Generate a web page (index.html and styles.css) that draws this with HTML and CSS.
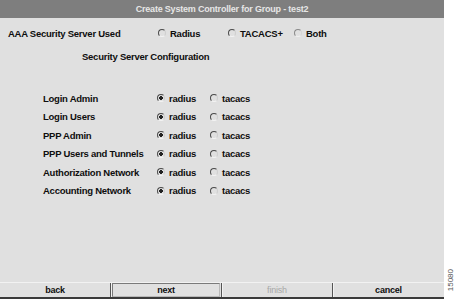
FILE: index.html
```html
<!DOCTYPE html>
<html lang="en">
<head>
    <meta charset="UTF-8">
    <title>Create System Controller for Group - test2</title>
    <link rel="stylesheet" href="styles.css">
</head>
<body>
    <div class="page">
        <div class="panel">
            <div class="title">Create System Controller for Group - test2</div>
            <div class="content">
                <div class="server-row">
                    <span class="label">AAA Security Server Used</span>
                    <label class="opt"><input type="radio" name="server"> Radius</label>
                    <label class="opt"><input type="radio" name="server"> TACACS+</label>
                    <label class="opt"><input type="radio" name="server" disabled> Both</label>
                </div>
                <div class="subhead">Security Server Configuration</div>
                <div class="config">
                    <div class="config-row">
                        <span class="label">Login Admin</span>
                        <label class="opt"><input type="radio" name="loginAdmin" checked> radius</label>
                        <label class="opt"><input type="radio" name="loginAdmin"> tacacs</label>
                    </div>
                    <div class="config-row">
                        <span class="label">Login Users</span>
                        <label class="opt"><input type="radio" name="loginUsers" checked> radius</label>
                        <label class="opt"><input type="radio" name="loginUsers"> tacacs</label>
                    </div>
                    <div class="config-row">
                        <span class="label">PPP Admin</span>
                        <label class="opt"><input type="radio" name="pppAdmin" checked> radius</label>
                        <label class="opt"><input type="radio" name="pppAdmin"> tacacs</label>
                    </div>
                    <div class="config-row">
                        <span class="label">PPP Users and Tunnels</span>
                        <label class="opt"><input type="radio" name="pppUsers" checked> radius</label>
                        <label class="opt"><input type="radio" name="pppUsers"> tacacs</label>
                    </div>
                    <div class="config-row">
                        <span class="label">Authorization Network</span>
                        <label class="opt"><input type="radio" name="authNet" checked> radius</label>
                        <label class="opt"><input type="radio" name="authNet"> tacacs</label>
                    </div>
                    <div class="config-row">
                        <span class="label">Accounting Network</span>
                        <label class="opt"><input type="radio" name="acctNet" checked> radius</label>
                        <label class="opt"><input type="radio" name="acctNet"> tacacs</label>
                    </div>
                </div>
            </div>
            <div class="buttons">
                <div class="btn">back</div>
                <div class="btn focused"><span>next</span></div>
                <div class="btn disabled">finish</div>
                <div class="btn">cancel</div>
            </div>
        </div>
        <div class="side">
            <span class="figure-id">15080</span>
        </div>
    </div>
</body>
</html>
```

FILE: styles.css
```css
body {
    margin: 0;
    padding: 0;
    background: #fff;
    font-family: "Liberation Sans", Arial, sans-serif;
    font-size: 9px;
    letter-spacing: -0.2px;
    font-weight: bold;
    color: #0e0e0e;
}

.page {
    display: flex;
    width: 456px;
    height: 299px;
}

.panel {
    width: 444px;
    height: 299px;
    display: flex;
    flex-direction: column;
    background: #e0e0e0;
}

.title {
    height: 18px;
    line-height: 18px;
    background: #7e7e7e;
    color: #e6e6e6;
    text-align: center;
}

.content {
    flex: 1;
    font-size: 9.5px;
    letter-spacing: -0.25px;
}

.label {
    display: inline-block;
}

.opt {
    display: flex;
    align-items: center;
    gap: 4px;
}

input[type="radio"] {
    -webkit-appearance: none;
    appearance: none;
    margin: 0;
    width: 8px;
    height: 8px;
    border-radius: 50%;
    border: 1px solid;
    border-color: #4a4a4a #cfcfcf #f4f4f4 #4a4a4a;
    background: #e0e0e0;
}

input[type="radio"]:checked {
    background: radial-gradient(circle, #222 0 1.6px, #e0e0e0 2px);
}

input[type="radio"]:disabled {
    border-color: #8a8a8a #d4d4d4 #f0f0f0 #8a8a8a;
}

.server-row {
    display: grid;
    grid-template-columns: 150px 70px 66px auto;
    align-items: center;
    height: 14px;
    margin-top: 8px;
    padding-left: 8px;
}

.subhead {
    margin-top: 10px;
    padding-left: 82px;
    height: 14px;
    line-height: 14px;
}

.config {
    margin-top: 27px;
    display: flex;
    flex-direction: column;
    gap: 4.5px;
}

.config-row {
    display: grid;
    grid-template-columns: 114px 53px auto;
    align-items: center;
    height: 14px;
    padding-left: 43px;
}

.buttons {
    display: grid;
    grid-template-columns: repeat(4, 1fr);
    height: 14px;
    border-top: 1px solid #f2f2f2;
    border-bottom: 2px solid #3a3a3a;
}

.btn {
    display: flex;
    align-items: center;
    justify-content: center;
    border-right: 1px solid #555;
    box-shadow: inset 1px 0 0 #f2f2f2;
}

.btn:first-child {
    box-shadow: none;
}

.btn:last-child {
    border-right: none;
}

.btn.focused span {
    display: flex;
    align-items: center;
    justify-content: center;
    width: calc(100% - 4px);
    height: 12px;
    border: 1px solid #7a7a7a;
    border-right-color: #b8b8b8;
    border-bottom-color: #b8b8b8;
}

.btn.disabled {
    color: #a8a8a8;
    font-weight: normal;
}

.side {
    flex: 1;
    display: flex;
    justify-content: center;
    align-items: flex-end;
    padding-bottom: 8px;
}

.figure-id {
    writing-mode: vertical-rl;
    transform: rotate(180deg);
    font-size: 8px;
    letter-spacing: 0;
    font-weight: normal;
    color: #555;
}
```
